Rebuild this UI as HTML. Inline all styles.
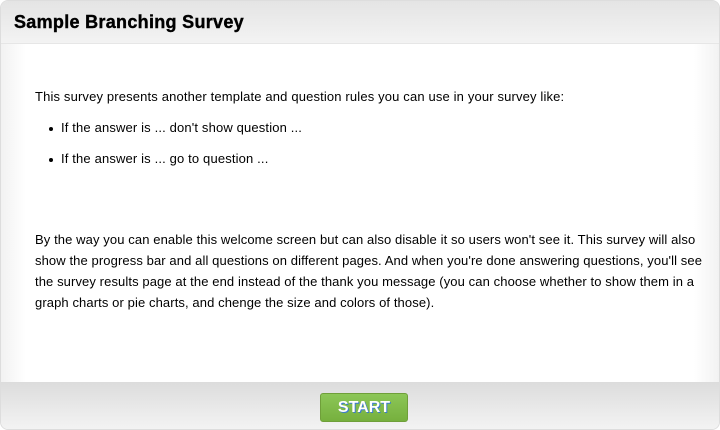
<!DOCTYPE html>
<html><head><style>
html,body{margin:0;padding:0;width:720px;height:430px;overflow:hidden;background:#fff;font-family:"Liberation Sans",Arial,sans-serif;}
.wrap{position:absolute;left:0;top:0;width:718px;height:428px;border:1px solid #ddd;border-radius:8px;overflow:hidden;background:linear-gradient(90deg,#f2f2f2 0,#fff 25px,#fff 693px,#f2f2f2 718px);}
.hd{position:absolute;left:0;top:0;width:718px;height:42px;background:linear-gradient(#e4e4e4,#f3f3f3);border-bottom:1px solid #e6e6e6;}
.hd h1{margin:0;position:absolute;left:13px;top:11px;font-size:18px;letter-spacing:0.3px;font-weight:bold;color:#000;-webkit-text-stroke:0.4px #000;}
.t{position:absolute;font-size:13px;letter-spacing:0.15px;color:#000;white-space:nowrap;}
.b::before{content:"";position:absolute;left:-12px;top:7px;width:4px;height:4px;border-radius:50%;background:#000;}
.p{position:absolute;left:34px;top:228px;font-size:13px;letter-spacing:0.1px;line-height:21px;color:#000;white-space:nowrap;}
.ft{position:absolute;left:0;top:381px;width:718px;height:47px;background:linear-gradient(#dcdcdc,#f3f3f3);}
.btn{position:absolute;left:319px;top:11px;width:86px;height:27px;border:1px solid #6f9f3a;border-radius:3px;background:linear-gradient(#8cc657,#76b03e);color:#fff;font-weight:bold;font-size:16px;text-align:center;line-height:27px;text-shadow:1px 1px 0 #3a7ad0;}
</style></head><body>
<div class="wrap">
<div class="hd"><h1>Sample Branching Survey</h1></div>
<div class="t" style="left:34px;top:88px">This survey presents another template and question rules you can use in your survey like:</div>
<div class="t b" style="left:60px;top:119px">If the answer is ... don't show question ...</div>
<div class="t b" style="left:60px;top:150px">If the answer is ... go to question ...</div>
<div class="p">By the way you can enable this welcome screen but can also disable it so users won't see it. This survey will also<br>show the progress bar and all questions on different pages. And when you're done answering questions, you'll see<br>the survey results page at the end instead of the thank you message (you can choose whether to show them in a<br>graph charts or pie charts, and chenge the size and colors of those).</div>
<div class="ft"><div class="btn">START</div></div>
</div>
</body></html>
